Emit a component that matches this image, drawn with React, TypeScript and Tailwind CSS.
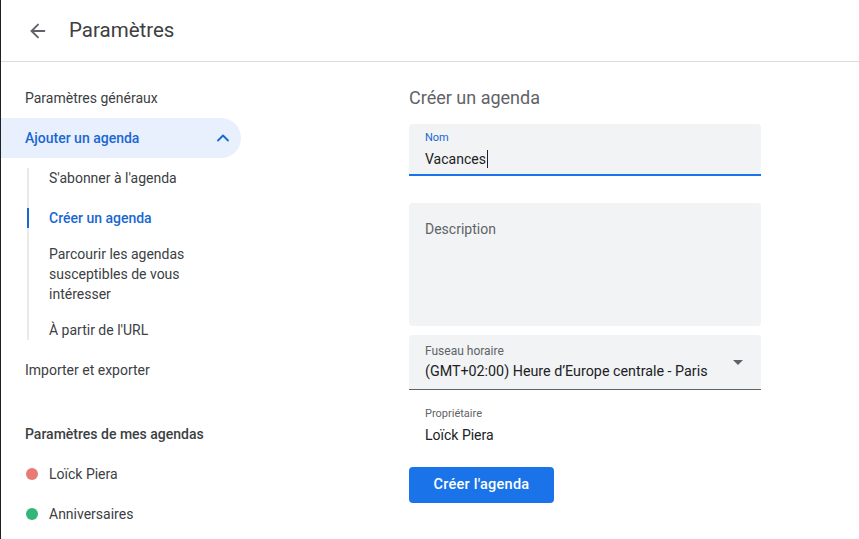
import { ArrowLeft, ChevronUp } from "lucide-react";

const font = { fontFamily: "Roboto, 'Noto Sans', Arial, sans-serif" };

function SubItem({ label, active, className = "" }: { label: string; active?: boolean; className?: string }) {
  return (
    <div
      className={`-ml-[2px] border-l-2 pl-[20px] pr-4 text-[14px] leading-[20px] ${
        active ? "border-[#1967d2] text-[#1967d2] font-medium" : "border-transparent text-[#3c4043]"
      } ${className}`}
    >
      {label}
    </div>
  );
}

function CalendarItem({ color, label }: { color: string; label: string }) {
  return (
    <div className="flex h-10 items-center gap-[11px] pl-[25px] text-[14px] text-[#3c4043]">
      <span className={`h-3 w-3 rounded-full ${color}`} />
      {label}
    </div>
  );
}

export default function App() {
  return (
    <div className="flex h-[539px] w-[859px] flex-col overflow-hidden border-l border-[#202124] bg-white" style={font}>
      <header className="flex h-[62px] shrink-0 items-center border-b border-[#dadce0] pl-[26px]">
        <ArrowLeft className="h-[22px] w-[22px] text-[#5f6368]" strokeWidth={2} />
        <h1 className="ml-[20px] text-[20.5px] leading-none text-[#3c4043]">Paramètres</h1>
      </header>

      <div className="flex flex-1">
        <nav className="w-[240px] shrink-0 pt-[16px]">
          <div className="flex h-10 items-center pl-[24px] text-[14px] text-[#3c4043]">Paramètres généraux</div>
          <div className="flex h-10 items-center justify-between rounded-r-full bg-[#e8f0fe] pl-[24px] pr-[8px] text-[14px] font-medium text-[#1967d2]">
            Ajouter un agenda
            <ChevronUp className="h-5 w-5" strokeWidth={2.2} />
          </div>
          <div className="ml-[26px] mt-[10px] flex flex-col border-l-2 border-[#e8eaed]">
            <SubItem label="S'abonner à l'agenda" />
            <SubItem label="Créer un agenda" active className="mt-[20px]" />
            <SubItem label={"Parcourir les agendas susceptibles de vous intéresser"} className="mt-[16px]" />
            <SubItem label="À partir de l'URL" className="mt-[16px]" />
          </div>
          <div className="mt-[10px] flex h-10 items-center pl-[24px] text-[14px] text-[#3c4043]">Importer et exporter</div>
          <div className="mt-[24px] flex h-10 items-center pl-[24px] text-[14px] font-medium text-[#3c4043]">
            Paramètres de mes agendas
          </div>
          <CalendarItem color="bg-[#e67c73]" label="Loïck Piera" />
          <CalendarItem color="bg-[#33b679]" label="Anniversaires" />
        </nav>

        <main className="ml-[168px] w-[352px] pt-[24px]">
          <h2 className="text-[18px] leading-[24px] text-[#5f6368]">Créer un agenda</h2>

          <div className="mt-[14px] h-[52px] rounded-t border-b-2 border-[#1a73e8] bg-[#f1f3f4] px-4 pt-[7px]">
            <div className="text-[11px] leading-[14px] text-[#1967d2]">Nom</div>
            <div className="mt-[4px] flex items-center text-[14px] leading-[20px] text-[#202124]">
              Vacances
              <span className="ml-[1px] h-[18px] w-px bg-[#202124]" />
            </div>
          </div>

          <div className="mt-[27px] h-[123px] rounded bg-[#f1f3f4] px-4 pt-[16px] text-[14px] leading-[20px] text-[#5f6368]">
            Description
          </div>

          <div className="mt-[9px] flex h-[55px] items-center justify-between rounded-t border-b border-[#5f6368] bg-[#f1f3f4] pl-4 pr-[18px]">
            <div>
              <div className="text-[12px] leading-[16px] text-[#5f6368]">Fuseau horaire</div>
              <div className="mt-[2px] text-[14.3px] leading-[20px] text-[#202124]">
                (GMT+02:00) Heure d’Europe centrale - Paris
              </div>
            </div>
            <span className="h-0 w-0 border-x-[5px] border-t-[5px] border-x-transparent border-t-[#5f6368]" />
          </div>

          <div className="px-4 pt-[16px]">
            <div className="text-[11px] leading-[16px] text-[#5f6368]">Propriétaire</div>
            <div className="mt-[3px] text-[14px] leading-[20px] text-[#202124]">Loïck Piera</div>
          </div>

          <button className="mt-[22px] h-9 w-[145px] rounded bg-[#1a73e8] text-[14.5px] font-medium tracking-[0.25px] text-white">
            Créer l'agenda
          </button>
        </main>
      </div>
    </div>
  );
}
